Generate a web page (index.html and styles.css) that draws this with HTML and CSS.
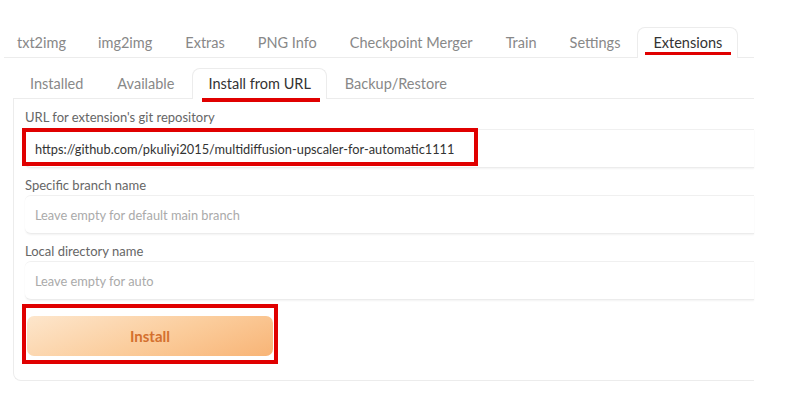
FILE: index.html
```html
<!DOCTYPE html>
<html lang="en">
<head>
  <meta charset="UTF-8">
  <title>Extensions - Install from URL</title>
  <link rel="stylesheet" href="styles.css">
</head>
<body>
  <div class="app">
    <!-- main tabs -->
    <div class="tabs main-tabs">
      <span class="tab">txt2img</span>
      <span class="tab">img2img</span>
      <span class="tab">Extras</span>
      <span class="tab">PNG Info</span>
      <span class="tab">Checkpoint Merger</span>
      <span class="tab">Train</span>
      <span class="tab">Settings</span>
      <span class="tab selected">Extensions</span>
    </div>

    <div class="ext-area">
      <!-- extension sub tabs -->
      <div class="tabs sub-tabs">
        <span class="tab">Installed</span>
        <span class="tab">Available</span>
        <span class="tab selected">Install from URL</span>
        <span class="tab">Backup/Restore</span>
      </div>

      <div class="panel">
        <div class="field">
          <label class="field-label">URL for extension's git repository</label>
          <div class="input-wrap">
            <input class="text-input" type="text" value="https://github.com/pkuliyi2015/multidiffusion-upscaler-for-automatic1111">
            <div class="mark mark-url"></div>
          </div>
        </div>
        <div class="field">
          <label class="field-label">Specific branch name</label>
          <input class="text-input" type="text" placeholder="Leave empty for default main branch">
        </div>
        <div class="field">
          <label class="field-label">Local directory name</label>
          <input class="text-input" type="text" placeholder="Leave empty for auto">
        </div>
        <div class="button-row">
          <button class="install-btn" type="button">Install</button>
          <div class="mark mark-btn"></div>
        </div>
      </div>
    </div>
  </div>
</body>
</html>
```

FILE: styles.css
```css
body {
  margin: 0;
  background-color: #fff;
  font-family: 'Lato', 'Open Sans', sans-serif;
  color: #444;
}
.app {
  width: 750px;
  margin-left: 4px;
  padding-top: 27px;
}
.tabs {
  display: flex;
  border-bottom: 1px solid #ececec;
  height: 30px;
}
.tab {
  position: relative;
  padding: 0 15.5px;
  line-height: 29px;
  font-size: 14.5px;
  color: #888;
  margin-right: 1px;
  border: 1px solid transparent;
  border-bottom: none;
  border-radius: 8px 8px 0 0;
  white-space: nowrap;
}
.main-tabs .tab {
  padding: 0 15px;
}
.main-tabs .tab:first-child {
  padding-left: 12px;
  padding-right: 14px;
}
.tab.selected {
  color: #333;
  border-color: #ececec;
  background-color: #fff;
  margin-bottom: -1px;
}
.tab.selected::after {
  content: '';
  position: absolute;
  left: 7px;
  right: 6px;
  bottom: 3px;
  height: 3px;
  background-color: #e00000;
}
.sub-tabs .tab.selected::after {
  left: 9px;
  bottom: -3px;
  height: 4px;
}
.ext-area {
  margin-left: 9px;
  padding-top: 10px;
}
.sub-tabs .tab:first-child {
  padding-left: 16px;
}
.panel {
  border-left: 1px solid #ececec;
  border-bottom: 1px solid #ececec;
  border-bottom-left-radius: 8px;
  padding: 10px 0 24px 11px;
}
.field {
  display: flex;
  flex-direction: column;
  margin-bottom: 9px;
}
.field-label {
  font-size: 13px;
  color: #666;
  line-height: 16px;
  margin-bottom: 2px;
}
.field:first-child .field-label {
  margin-bottom: 4px;
}
.input-wrap {
  position: relative;
}
.text-input {
  box-sizing: border-box;
  width: 100%;
  height: 39px;
  padding: 0 10px;
  border: none;
  border-top: 1px solid #f0f0f0;
  border-bottom: 1px solid #ececec;
  border-radius: 6px 0 0 6px;
  box-shadow: 0 1px 2px rgba(0, 0, 0, 0.05);
  font-family: 'Lato', 'Open Sans', sans-serif;
  font-size: 12.8px;
  color: #333;
  outline: none;
}
.text-input::placeholder {
  color: #aaa;
}
.mark {
  position: absolute;
  border: 4px solid #e00000;
  pointer-events: none;
}
.mark-url {
  left: -3px;
  top: -1px;
  width: 448px;
  height: 30px;
}
.button-row {
  position: relative;
  padding-top: 7px;
}
.install-btn {
  display: block;
  width: 246px;
  height: 40px;
  margin-left: 2px;
  border: none;
  border-radius: 7px;
  background: linear-gradient(160deg, #fde6cc 0%, #fbcc9b 55%, #f8b476 100%);
  color: #d4702e;
  font-family: 'Lato', 'Open Sans', sans-serif;
  font-size: 15px;
  font-weight: 700;
}
.mark-btn {
  left: -3px;
  top: -5px;
  width: 248px;
  height: 52px;
}
```
